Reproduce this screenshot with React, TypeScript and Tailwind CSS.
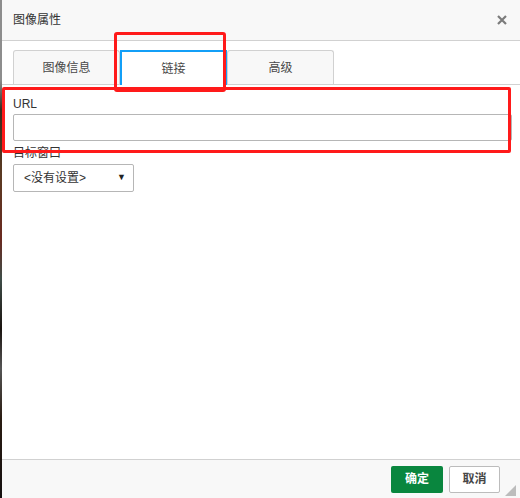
import React from 'react';

const font = { fontFamily: '"Liberation Sans", "Noto Sans CJK SC", sans-serif' };

const tabs = ['图像信息', '链接', '高级'];

export default function App() {
    const active = 1;

    return (
        <div className="relative flex w-[520px] h-[498px] overflow-hidden text-[#333]" style={font}>
            {/* page behind the dialog */}
            <div className="w-[2px] h-full bg-[linear-gradient(to_bottom,#8d8d8d_0%,#8d8d8d_16%,#3a2a1c_22%,#5a3a22_35%,#6a2a20_48%,#3f4d48_56%,#1a1410_66%,#555_74%,#2a1c12_84%,#151010_100%)]" />

            <div className="flex-1 flex flex-col bg-white">
                {/* Title bar */}
                <div className="h-[41px] flex items-center justify-between pl-[11px] pr-[13px] bg-[#f8f8f8] border-b border-[#d1d1d1]">
                    <span className="text-[12px]">图像属性</span>
                    <svg width="10" height="10" viewBox="0 0 10 10" className="text-[#7b7b7b]">
                        <path d="M1 1 L9 9 M9 1 L1 9" stroke="currentColor" strokeWidth="2.2" />
                    </svg>
                </div>

                {/* Tabs */}
                <div className="h-[44px] flex items-end pl-[11px] border-b border-[#d1d1d1]">
                    {tabs.map((t, i) =>
                        i === active ? (
                            <div key={t} className="w-[107px] h-[35px] -mb-px flex items-center justify-center bg-white border-2 border-b-0 border-[#139ff7] text-[12px] text-[#484848]">
                                {t}
                            </div>
                        ) : (
                            <div key={t} className="w-[107px] h-[34px] flex items-center justify-center bg-[#f8f8f8] border border-b-0 border-[#d1d1d1] rounded-t-[3px] text-[12px] text-[#484848]">
                                {t}
                            </div>
                        )
                    )}
                </div>

                {/* Body */}
                <div className="flex-1 pl-[11px] pr-[8px] pt-[11px]">
                    <div className="text-[12px] leading-[16px]">URL</div>
                    <div className="mt-[2px] h-[27px] border border-[#b6b6b6] rounded-[2px] bg-white" />
                    <div className="mt-[4px] text-[12px] leading-[16px]">目标窗口</div>
                    <div className="mt-[3px] w-[121px] h-[28px] flex items-center justify-between pl-[10px] pr-[7px] border border-[#b6b6b6] rounded-[2px] bg-white text-[12px]">
                        <span>&lt;没有设置&gt;</span>
                        <span className="text-[9px] text-[#222]">▼</span>
                    </div>
                </div>

                {/* Footer */}
                <div className="h-[39px] flex items-center justify-end gap-[6px] pr-[20px] bg-[#f8f8f8] border-t border-[#d1d1d1]">
                    <div className="w-[52px] h-[27px] flex items-center justify-center rounded-[2px] bg-[#09863e] text-white text-[12px] font-bold">
                        确定
                    </div>
                    <div className="w-[51px] h-[27px] flex items-center justify-center rounded-[2px] bg-white border border-[#bcbcbc] text-[#474747] text-[12px] font-bold">
                        取消
                    </div>
                </div>
            </div>

            {/* resize grip */}
            <svg width="11" height="11" viewBox="0 0 11 11" className="absolute right-[4px] bottom-[2px]">
                <path d="M11 0 L11 11 L0 11 Z" fill="#bcbcbc" />
            </svg>

            {/* red annotation boxes */}
            <div className="absolute left-[114px] top-[32px] w-[112px] h-[60px] border-[3px] border-[#ff1a1a] rounded-[3px]" />
            <div className="absolute left-[2px] top-[87px] w-[509px] h-[66px] border-[3px] border-[#ff1a1a] rounded-[2px]" />
        </div>
    );
}
